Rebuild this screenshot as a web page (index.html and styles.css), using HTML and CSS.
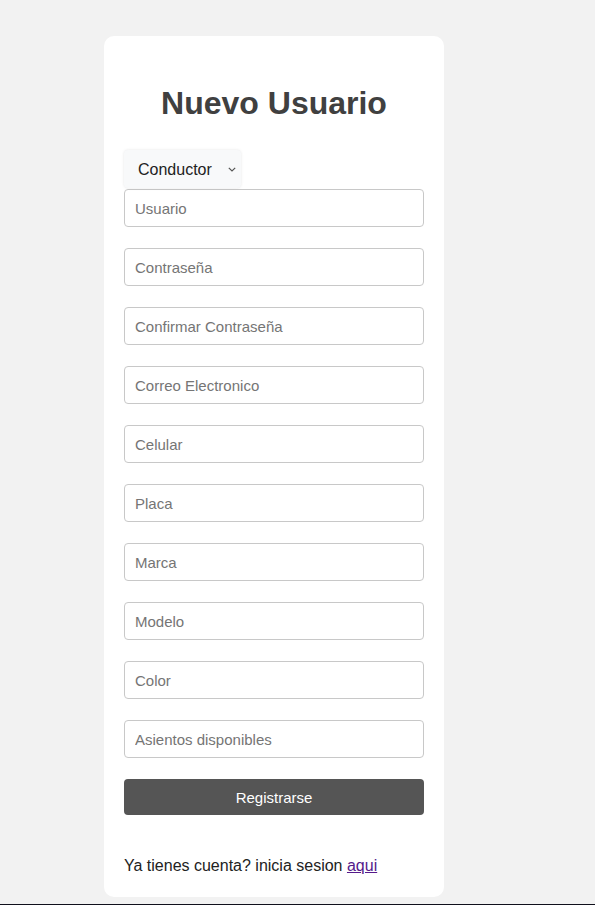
FILE: index.html
```html
<!DOCTYPE html>
<html lang="es">
<head>
<meta charset="utf-8">
<title>Nuevo Usuario</title>
<link rel="stylesheet" href="styles.css">
</head>
<body>
<div class="page">
  <form class="card">
    <h1 class="title">Nuevo Usuario</h1>
    <div class="select-wrap">
      <select class="role">
        <option>Conductor</option>
        <option>Pasajero</option>
      </select>
      <svg class="chev" width="8" height="5" viewBox="0 0 8 5"><path d="M0.8 0.8 L4 4 L7.2 0.8" fill="none" stroke="#555" stroke-width="1.2"/></svg>
    </div>
    <input class="field" type="text" placeholder="Usuario">
    <input class="field" type="password" placeholder="Contraseña">
    <input class="field" type="password" placeholder="Confirmar Contraseña">
    <input class="field" type="text" placeholder="Correo Electronico">
    <input class="field" type="text" placeholder="Celular">
    <input class="field" type="text" placeholder="Placa">
    <input class="field" type="text" placeholder="Marca">
    <input class="field" type="text" placeholder="Modelo">
    <input class="field" type="text" placeholder="Color">
    <input class="field" type="text" placeholder="Asientos disponibles">
    <button class="submit" type="button">Registrarse</button>
    <p class="foot">Ya tienes cuenta? inicia sesion <a class="link" href="#">aqui</a></p>
  </form>
</div>
</body>
</html>
```
FILE: styles.css
```css
html, body {
  margin: 0;
  padding: 0;
  background: #f2f2f2;
  font-family: "Liberation Sans", Arial, sans-serif;
}
.page {
  padding: 36px 0 7px 104px;
  border-bottom: 1px solid #10101c;
}
.card {
  width: 300px;
  height: 821px;
  background: #fff;
  border-radius: 10px;
  padding: 20px;
  display: flex;
  flex-direction: column;
}
.title {
  margin: 29px 0 28px;
  font-size: 32px;
  font-weight: bold;
  color: #404040;
  text-align: center;
  line-height: 37px;
}
.select-wrap {
  position: relative;
  width: 117px;
  height: 38px;
  margin-bottom: 1px;
}
.role {
  appearance: none;
  -webkit-appearance: none;
  width: 117px;
  height: 38px;
  border: none;
  border-radius: 4px;
  background: #f8f9fa;
  box-shadow: 0 0 3px rgba(0,0,0,0.1);
  padding: 0 0 0 14px;
  font-family: "Liberation Sans", Arial, sans-serif;
  font-size: 16px;
  color: #222;
}
.chev {
  position: absolute;
  right: 5px;
  top: 17px;
}
.field {
  box-sizing: border-box;
  width: 300px;
  height: 38px;
  margin: 0 0 21px;
  padding: 0 10px;
  border: 1px solid #c8c8c8;
  border-radius: 4px;
  font-family: "Liberation Sans", Arial, sans-serif;
  font-size: 15px;
  color: #222;
  background: #fff;
}
.field::placeholder {
  color: #757575;
}
.submit {
  width: 300px;
  height: 36px;
  border: none;
  border-radius: 4px;
  background: #555;
  color: #fff;
  font-family: "Liberation Sans", Arial, sans-serif;
  font-size: 15px;
}
.foot {
  margin: 41px 0 0;
  font-size: 16px;
  color: #222;
  line-height: 20px;
}
.link {
  color: #551a8b;
}
```
